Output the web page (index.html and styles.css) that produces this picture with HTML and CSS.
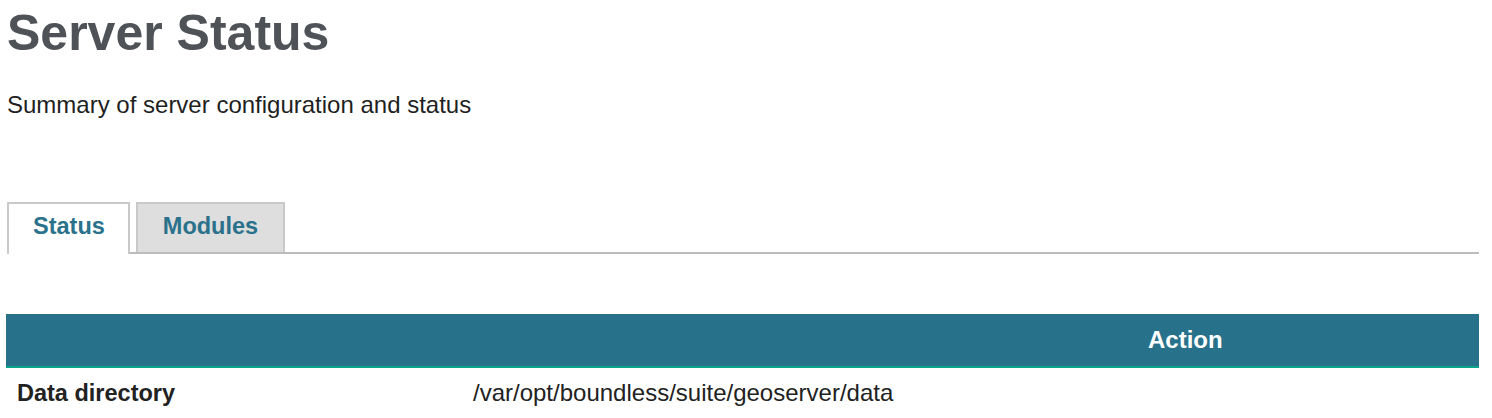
FILE: index.html
```html
<!DOCTYPE html>
<html lang="en">
<head>
<meta charset="utf-8">
<title>Server Status</title>
<link rel="stylesheet" href="styles.css">
</head>
<body>
<div class="page">
  <h1 class="title">Server Status</h1>
  <p class="subtitle">Summary of server configuration and status</p>
  <ul class="tabs">
    <li class="tab active">Status</li>
    <li class="tab">Modules</li>
  </ul>
  <table class="status-table">
    <colgroup>
      <col class="c1">
      <col class="c2">
      <col class="c3">
    </colgroup>
    <thead>
      <tr><th></th><th></th><th>Action</th></tr>
    </thead>
    <tbody>
      <tr><td class="label">Data directory</td><td>/var/opt/boundless/suite/geoserver/data</td><td></td></tr>
    </tbody>
  </table>
</div>
</body>
</html>
```
FILE: styles.css
```css
html, body {
  margin: 0;
  padding: 0;
  background: #ffffff;
}
body {
  font-family: "Liberation Sans", Arial, sans-serif;
  color: #222222;
}
.page {
  padding: 4px 13px 0 6px;
}
.title {
  margin: 0;
  padding-left: 1px;
  font-size: 50px;
  line-height: 58px;
  font-weight: bold;
  color: #4f5257;
}
.subtitle {
  margin: 29px 0 0 0;
  padding-left: 1px;
  font-size: 24px;
  line-height: 28px;
  color: #1f1f1f;
}
.tabs {
  list-style: none;
  margin: 83px 0 0 1px;
  padding: 0;
  display: flex;
  gap: 6px;
  border-bottom: 2px solid #bcbcbc;
}
.tab {
  box-sizing: border-box;
  height: 50px;
  padding: 0 23px 0 24px;
  border: 2px solid #c9c9c9;
  border-bottom: none;
  background: #dedede;
  color: #2a718b;
  font-size: 23.5px;
  font-weight: bold;
  line-height: 44px;
}
.tab + .tab {
  padding: 0 25px 0 25px;
}
.tab.active {
  background: #ffffff;
  height: 52px;
  margin-bottom: -2px;
}
.status-table {
  margin-top: 60px;
  width: 100%;
  border-collapse: collapse;
  table-layout: fixed;
}
.c1 { width: 456px; }
.c2 { width: 675px; }
.status-table th {
  background: #28718b;
  color: #ffffff;
  height: 52px;
  padding: 0 11px;
  text-align: left;
  font-size: 24px;
  font-weight: bold;
  border-bottom: 2px solid #08a48c;
}
.status-table td {
  padding: 0 11px;
  height: 50px;
  font-size: 24px;
  vertical-align: middle;
}
.status-table td.label {
  font-weight: bold;
  font-size: 23.5px;
}
```
